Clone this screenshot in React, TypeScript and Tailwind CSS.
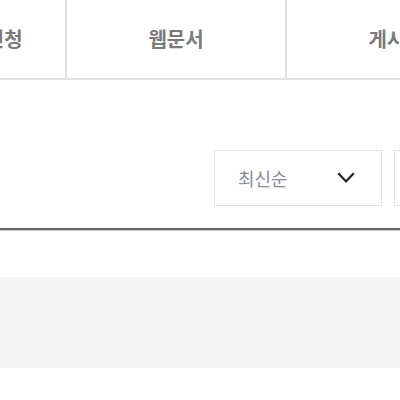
import React from "react";

const tabs = ["사이트 등록신청", "웹문서", "게시물"];

function Chevron() {
  return (
    <svg width="18" height="12" viewBox="0 0 18 12" fill="none">
      <path d="M2 2 L9 9.5 L16 2" stroke="#222" strokeWidth="2.2" strokeLinecap="square" />
    </svg>
  );
}

export default function App() {
  return (
    <div
      className="w-[400px] h-[400px] overflow-hidden bg-white"
      style={{ fontFamily: '"Noto Sans CJK KR", "Noto Sans", sans-serif' }}
    >
      {/* 탭 메뉴 */}
      <div className="flex ml-[-153px] h-[80px]">
        {tabs.map((t) => (
          <div
            key={t}
            className="w-[220px] shrink-0 flex items-center justify-center border-r-2 border-b-2 border-[#e1e1e1] text-[20px] font-bold text-[#7a7a7a]"
          >
            {t}
          </div>
        ))}
      </div>

      {/* 정렬 */}
      <div className="flex gap-3 pl-[214px] mt-[70px]">
        <div className="w-[168px] h-[56px] shrink-0 border border-[#e3e3e3] flex items-center justify-between pl-[23px] pr-[26px]">
          <span className="text-[18px] text-[#8a8d93]">최신순</span>
          <Chevron />
        </div>
        <div className="w-[168px] h-[56px] shrink-0 border border-[#e3e3e3]" />
      </div>

      <div className="mt-[22px] h-[2px] bg-[#666]" />
      <div className="h-[1px] bg-[#cfcfcf]" />

      <div className="mt-[46px] h-[91px] bg-[#f5f5f5]" />
    </div>
  );
}
